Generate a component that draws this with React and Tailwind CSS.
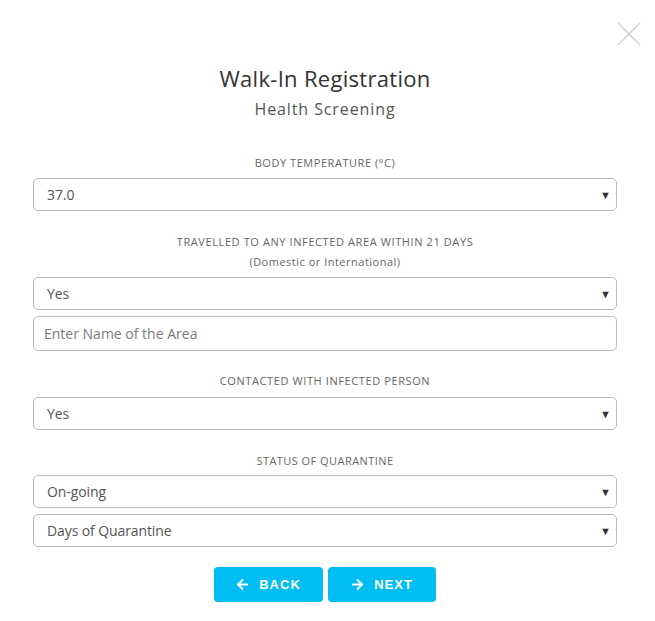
import React from "react";
import { FaArrowLeft, FaArrowRight } from "react-icons/fa";

const font = { fontFamily: '"Open Sans", "Liberation Sans", sans-serif' };

function Select({ value, className = "" }) {
  return (
    <div
      className={`flex h-[33px] items-center justify-between rounded-[5px] border border-[#b7bec1] bg-white pl-[13px] pr-[5px] ${className}`}
    >
      <span className="text-[14px] tracking-[-0.1px] text-[#555]">{value}</span>
      <span className="text-[11px] leading-none text-[#333]">▼</span>
    </div>
  );
}

function Label({ children, className = "" }) {
  return (
    <div className={`text-center text-[11px] uppercase leading-[16px] text-[#666] ${className}`}>
      {children}
    </div>
  );
}

export default function App() {
  return (
    <div className="relative min-h-[621px] w-[655px] bg-white" style={font}>
      <button className="absolute left-[617px] top-[22px] h-[24px] w-[24px]">
        <svg width="24" height="24" viewBox="0 0 24 24">
          <path d="M1 1 L23 23 M23 1 L1 23" stroke="#d2d2d2" strokeWidth="1.6" fill="none" />
        </svg>
      </button>
      <div className="ml-[33px] w-[584px] pt-[64px]">
        <div className="text-center text-[22px] leading-[28px] tracking-[0.3px] text-[#333]">Walk-In Registration</div>
        <div className="mt-[7px] text-center text-[16px] leading-[20px] tracking-[0.9px] text-[#555]">Health Screening</div>

        <Label className="mt-[36px] tracking-[0.55px]">Body Temperature (°C)</Label>
        <Select value="37.0" className="mt-[7px]" />

        <Label className="mt-[21px] leading-[20px] tracking-[0.6px]">Travelled to any infected area within 21 days</Label>
        <div className="text-center text-[11px] leading-[20px] tracking-[0.5px] text-[#666]">(Domestic or International)</div>
        <Select value="Yes" className="mt-[5px]" />
        <div className="mt-[6px] flex h-[35px] items-center rounded-[5px] border border-[#b7bec1] pl-[10px]">
          <span className="text-[14px] tracking-[0px] text-[#7a7a7a]">Enter Name of the Area</span>
        </div>

        <Label className="mt-[22px] tracking-[0.6px]">Contacted with infected person</Label>
        <Select value="Yes" className="mt-[8px]" />

        <Label className="mt-[23px] tracking-[0.45px]">Status of Quarantine</Label>
        <Select value="On-going" className="mt-[6px]" />
        <Select value="Days of Quarantine" className="mt-[6px]" />

        <div className="mt-[20px] flex justify-center gap-[5px]">
          <button
            className="flex h-[35px] w-[109px] items-center justify-center gap-[10px] rounded-[4px] bg-[#00bdf2] text-[13px] font-bold tracking-[1px] text-white"
            style={{ fontFamily: '"Liberation Sans", Arial, sans-serif' }}
          >
            <FaArrowLeft className="h-[13px] w-[13px]" />
            BACK
          </button>
          <button
            className="flex h-[35px] w-[108px] items-center justify-center gap-[10px] rounded-[4px] bg-[#00bdf2] text-[13px] font-bold tracking-[1px] text-white"
            style={{ fontFamily: '"Liberation Sans", Arial, sans-serif' }}
          >
            <FaArrowRight className="h-[13px] w-[13px]" />
            NEXT
          </button>
        </div>
      </div>
    </div>
  );
}
